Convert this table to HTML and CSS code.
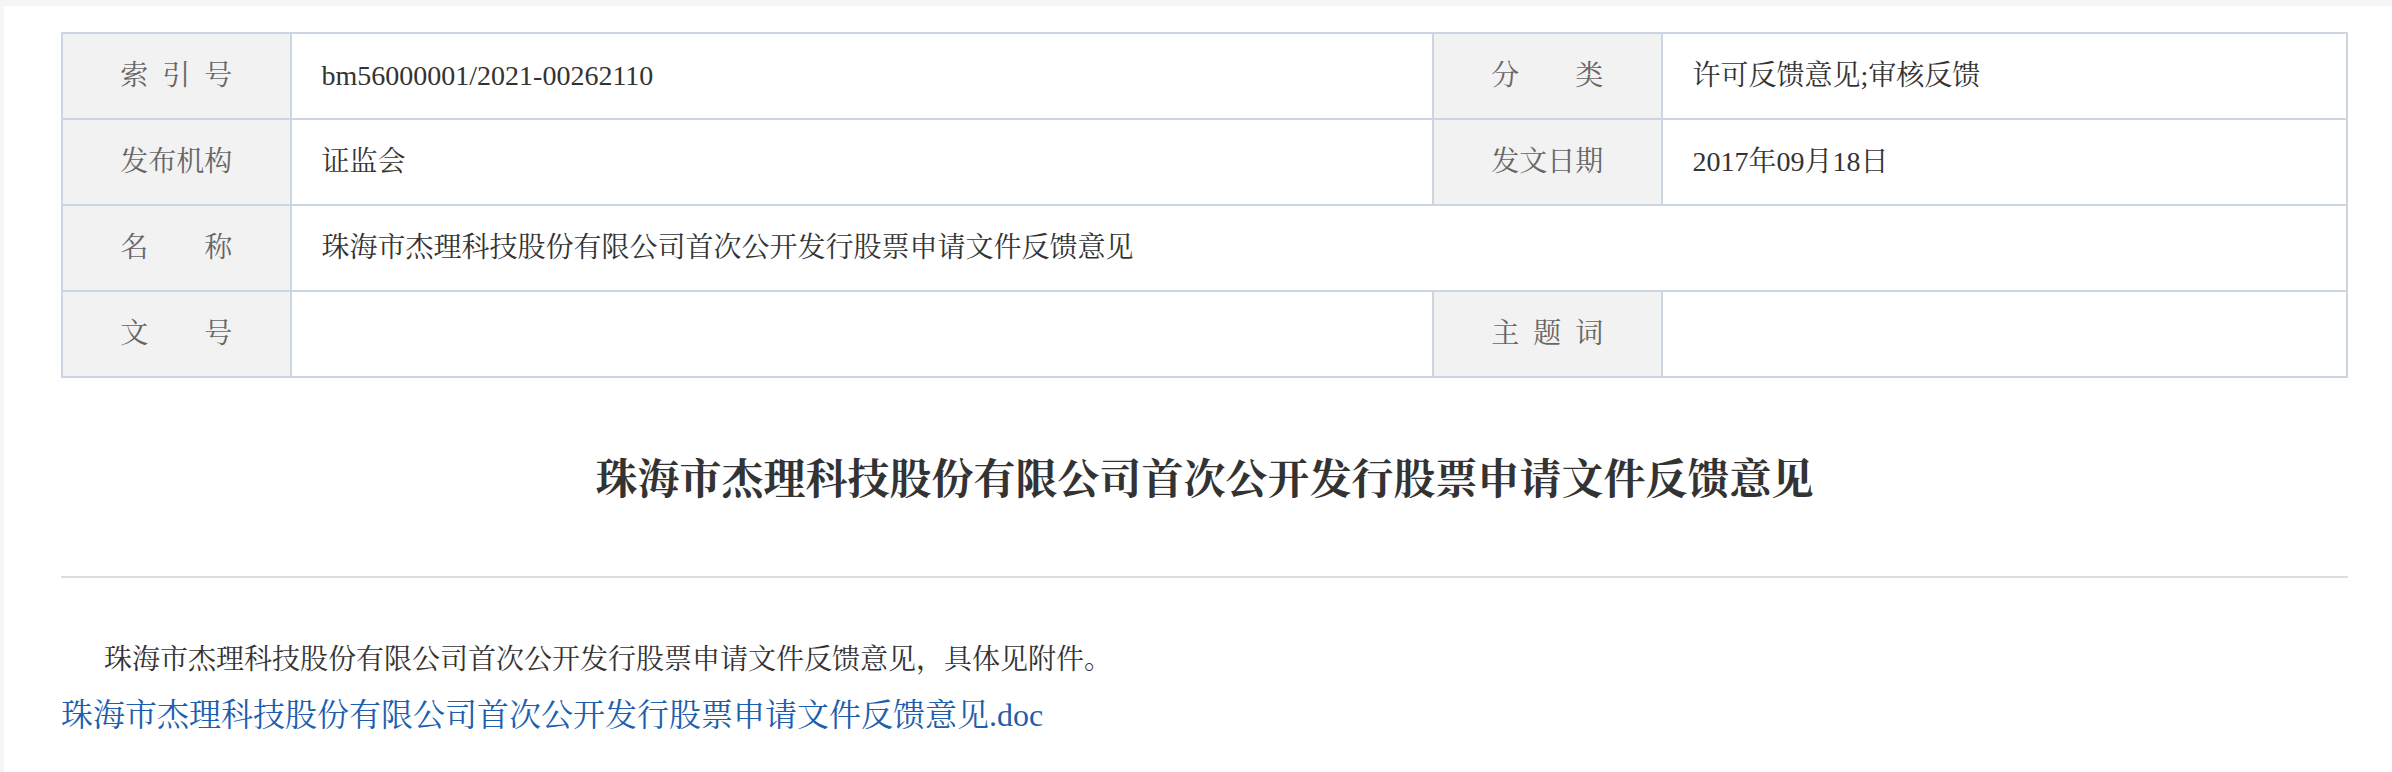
FILE: index.html
```html
<!DOCTYPE html>
<html lang="zh-CN">
<head>
<meta charset="utf-8">
<title>珠海市杰理科技股份有限公司首次公开发行股票申请文件反馈意见</title>
<link rel="stylesheet" href="styles.css">
</head>
<body>
<div class="page">
  <table class="info">
    <colgroup>
      <col class="c-label"><col class="c-wide"><col class="c-label"><col class="c-narrow">
    </colgroup>
    <tr>
      <th><span class="lbl">索 引 号</span></th>
      <td>bm56000001/2021-00262110</td>
      <th><span class="lbl">分　　类</span></th>
      <td>许可反馈意见;审核反馈</td>
    </tr>
    <tr>
      <th><span class="lbl">发布机构</span></th>
      <td>证监会</td>
      <th><span class="lbl">发文日期</span></th>
      <td>2017年09月18日</td>
    </tr>
    <tr>
      <th><span class="lbl">名　　称</span></th>
      <td colspan="3">珠海市杰理科技股份有限公司首次公开发行股票申请文件反馈意见</td>
    </tr>
    <tr>
      <th><span class="lbl">文　　号</span></th>
      <td></td>
      <th><span class="lbl">主 题 词</span></th>
      <td></td>
    </tr>
  </table>

  <h1 class="title">珠海市杰理科技股份有限公司首次公开发行股票申请文件反馈意见</h1>

  <div class="content">
    <p class="lead">珠海市杰理科技股份有限公司首次公开发行股票申请文件反馈意见，具体见附件。</p>
    <p class="attach"><a href="#">珠海市杰理科技股份有限公司首次公开发行股票申请文件反馈意见.doc</a></p>
  </div>
</div>
</body>
</html>
```

FILE: styles.css
```css
html, body {
  margin: 0;
  padding: 0;
}

body {
  background: #f5f5f5;
  font-family: "Liberation Serif", "Noto Serif CJK SC", "Noto Sans CJK SC", serif;
  color: #333333;
}

.page {
  margin: 6px 0 0 4px;
  background: #ffffff;
  padding: 26px 44px 40px 57px;
  min-height: 700px;
}

.info {
  width: 100%;
  border-collapse: collapse;
  table-layout: fixed;
  font-size: 28px;
}

.c-label { width: 10%; }
.c-wide { width: 50%; }
.c-narrow { width: 30%; }

.info th,
.info td {
  border: 2px solid #cbd6e0;
  height: 84px;
  padding: 0 30px;
  vertical-align: middle;
  line-height: 1.4;
}

.info th {
  background: #f2f2f2;
  color: #666666;
  font-weight: normal;
  text-align: center;
  padding: 0;
}

.info td {
  color: #333333;
  text-align: left;
}

.lbl {
  display: inline-block;
  width: 4em;
  text-align: justify;
  text-align-last: justify;
  white-space: normal;
}

.title {
  margin: 0;
  padding: 69px 0 63px;
  font-size: 42px;
  line-height: 66px;
  font-weight: bold;
  text-align: center;
  color: #333333;
  border-bottom: 2px solid #dddddd;
}

.content {
  padding-top: 57px;
}

.lead {
  margin: 0;
  font-size: 28px;
  line-height: 49px;
  text-indent: 43px;
  color: #333333;
}

.attach {
  margin: 7px 0 0;
  font-size: 32px;
  line-height: 48px;
}

.attach a {
  color: #1d5fae;
  text-decoration: none;
}
```
